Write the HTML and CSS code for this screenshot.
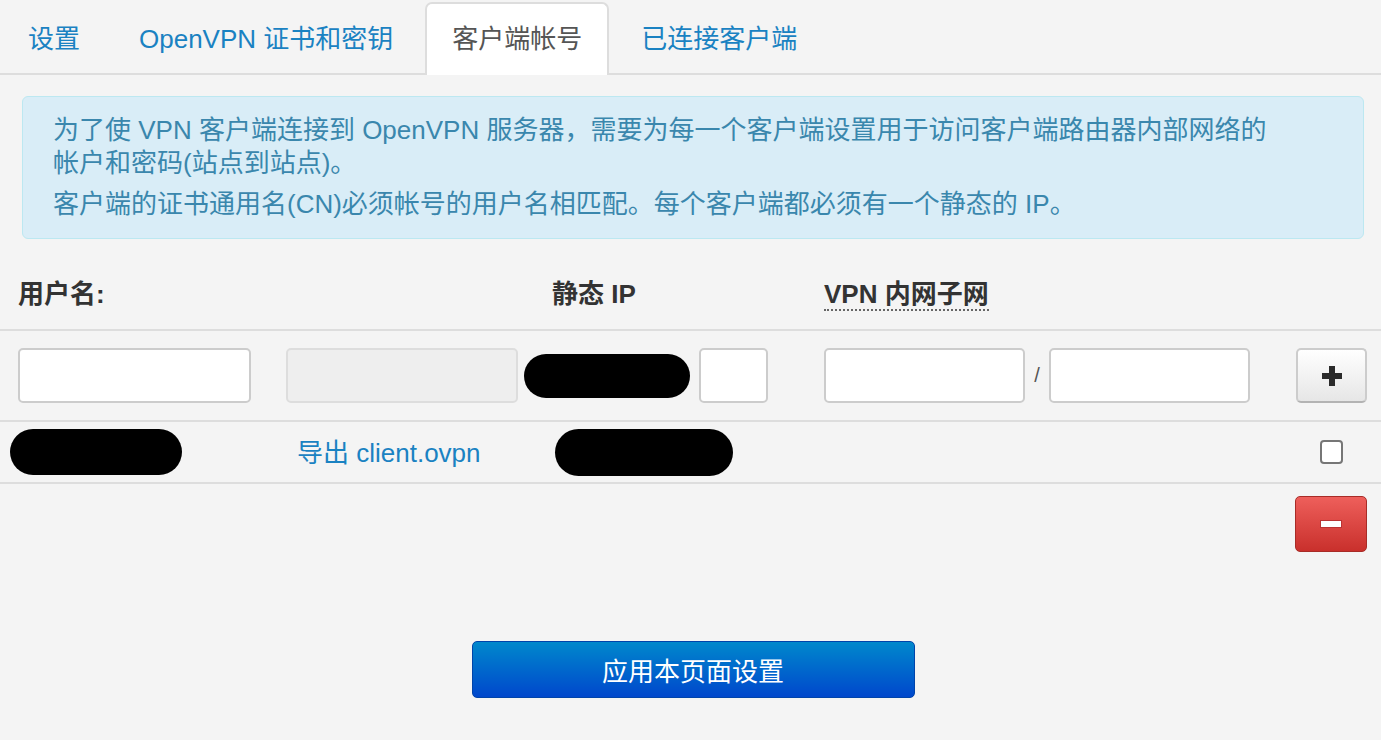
FILE: index.html
```html
<!DOCTYPE html>
<html lang="zh-CN">
<head>
    <meta charset="UTF-8">
    <title>OpenVPN 客户端帐号</title>
    <link rel="stylesheet" href="styles.css">
</head>
<body>
    <ul class="tabs">
        <li><a href="#">设置</a></li>
        <li><a href="#">OpenVPN 证书和密钥</a></li>
        <li class="active"><a href="#">客户端帐号</a></li>
        <li><a href="#">已连接客户端</a></li>
    </ul>

    <div class="alert">
        <p>为了使 VPN 客户端连接到 OpenVPN 服务器，需要为每一个客户端设置用于访问客户端路由器内部网络的<br>帐户和密码(站点到站点)。</p>
        <p class="second">客户端的证书通用名(CN)必须帐号的用户名相匹配。每个客户端都必须有一个静态的 IP。</p>
    </div>

    <div class="grid">
        <!-- 表头 -->
        <div class="row head">
            <div class="cell">用户名:</div>
            <div class="cell"></div>
            <div class="cell ip-head">静态 IP</div>
            <div class="cell"><abbr title="VPN 内网子网">VPN 内网子网</abbr></div>
            <div class="cell"></div>
        </div>

        <!-- 添加 -->
        <div class="row add">
            <div class="cell"><input type="text" class="input-user"></div>
            <div class="cell"><input type="text" class="input-pass" disabled></div>
            <div class="cell ip-cell">
                <span class="blob blob-ip"></span>
                <input type="text" class="input-ip">
            </div>
            <div class="cell subnet">
                <input type="text" class="input-net">
                <span class="slash">/</span>
                <input type="text" class="input-net">
            </div>
            <div class="cell"><button class="btn-add" title="添加"><span class="plus"></span></button></div>
        </div>

        <!-- 客户端 -->
        <div class="row client">
            <div class="cell"><span class="blob blob-name"></span></div>
            <div class="cell"><a href="#" class="export">导出 client.ovpn</a></div>
            <div class="cell"><span class="blob blob-addr"></span></div>
            <div class="cell"></div>
            <div class="cell"><input type="checkbox" class="check"></div>
        </div>
    </div>

    <div class="del-row">
        <button class="btn-del" title="删除"><span class="minus"></span></button>
    </div>

    <div class="apply-row">
        <button class="btn-apply">应用本页面设置</button>
    </div>
</body>
</html>
```

FILE: styles.css
```css
body {
    font-family: "Liberation Sans", "Noto Sans CJK SC", sans-serif;
    font-size: 26px;
    background-color: #f4f4f4;
    color: #333;
    margin: 0;
    padding: 0;
}

.tabs {
    list-style: none;
    margin: 0;
    padding: 2px 0 0 1px;
    display: flex;
    border-bottom: 2px solid #ddd;
    height: 71px;
}

.tabs li {
    margin-right: 5px;
}

.tabs a {
    display: block;
    height: 69px;
    line-height: 70px;
    padding: 0 25px;
    color: #1a82c2;
    text-decoration: none;
    border: 2px solid transparent;
    border-bottom: none;
    border-radius: 7px 7px 0 0;
}

.tabs .active a {
    background: #fff;
    color: #555;
    border-color: #ddd;
    height: 71px;
}

.alert {
    margin: 21px 17px 0 22px;
    padding: 17px 30px 17px 30px;
    background: #d9edf7;
    border: 1px solid #bce8f1;
    border-radius: 6px;
    color: #3a87ad;
    line-height: 33px;
}

.alert p {
    margin: 0;
}

.alert .second {
    margin-top: 8px;
}

.row {
    display: grid;
    grid-template-columns: 268px 252px 286px 472px 1fr;
    align-items: center;
    border-bottom: 2px solid #ddd;
}

.head {
    margin-top: 20px;
    height: 72px;
    font-weight: bold;
    padding-bottom: 5px;
    box-sizing: border-box;
}

.head .cell {
    padding-left: 18px;
}

.head .ip-head {
    padding-left: 32px;
}

abbr {
    text-decoration: none;
    border-bottom: 2px dotted #666;
    padding-bottom: 0;
}

.add {
    height: 89px;
}

input[type="text"] {
    box-sizing: border-box;
    height: 55px;
    border: 2px solid #ccc;
    border-radius: 5px;
    background: #fff;
    font-size: 26px;
    padding: 0 8px;
}

.input-user {
    margin-left: 18px;
    width: 233px;
}

.input-pass {
    margin-left: 18px;
    width: 232px;
    background: #eee !important;
    border-color: #ddd !important;
}

.ip-cell, .subnet {
    display: flex;
    align-items: center;
}

.blob {
    display: block;
    background: #000;
    border-radius: 24px;
}

.blob-ip {
    margin-left: 4px;
    width: 166px;
    height: 44px;
}

.input-ip {
    margin-left: 9px;
    width: 69px;
}

.subnet {
    padding-left: 18px;
}

.input-net {
    width: 201px;
}

.slash {
    width: 24px;
    text-align: center;
    font-size: 20px;
    color: #555;
}

.btn-add {
    margin-left: 18px;
    width: 71px;
    height: 55px;
    border: 2px solid #ccc;
    border-bottom-color: #b3b3b3;
    border-radius: 5px;
    background: linear-gradient(#fff, #e6e6e6);
    padding: 0;
    display: flex;
    align-items: center;
    justify-content: center;
}

.plus {
    position: relative;
    display: block;
    width: 20px;
    height: 20px;
}

.plus::before, .plus::after {
    content: "";
    position: absolute;
    background: #2b2b2b;
}

.plus::before {
    left: 0;
    top: 7px;
    width: 20px;
    height: 6px;
}

.plus::after {
    left: 7px;
    top: 0;
    width: 6px;
    height: 20px;
}

.client {
    height: 60px;
}

.blob-name {
    margin-left: 10px;
    width: 172px;
    height: 46px;
}

.export {
    margin-left: 29px;
    color: #1a82c2;
    text-decoration: none;
    position: relative;
    top: -2px;
}

.blob-addr {
    margin-left: 35px;
    width: 178px;
    height: 47px;
}

.check {
    appearance: none;
    margin: 0 0 0 42px;
    width: 23px;
    height: 24px;
    border: 2px solid #767676;
    border-radius: 4px;
    background: #fff;
    display: block;
}

.del-row {
    display: flex;
    justify-content: flex-end;
    padding: 12px 14px 0 0;
}

.btn-del {
    width: 72px;
    height: 56px;
    border: 1px solid #a82c27;
    border-radius: 5px;
    background: linear-gradient(#ee5f5b, #c9302c);
    display: flex;
    align-items: center;
    justify-content: center;
    padding: 0;
}

.minus {
    display: block;
    width: 20px;
    height: 6px;
    background: #fff;
    border: 1px solid #b33;
}

.apply-row {
    display: flex;
    justify-content: center;
    padding: 89px 0 0 5px;
}

.btn-apply {
    width: 443px;
    height: 57px;
    border: 1px solid #0044aa;
    border-radius: 5px;
    background: linear-gradient(#0088cc, #0047cc);
    color: #fff;
    font-family: "Liberation Sans", "Noto Sans CJK SC", sans-serif;
    font-size: 26px;
}
```
